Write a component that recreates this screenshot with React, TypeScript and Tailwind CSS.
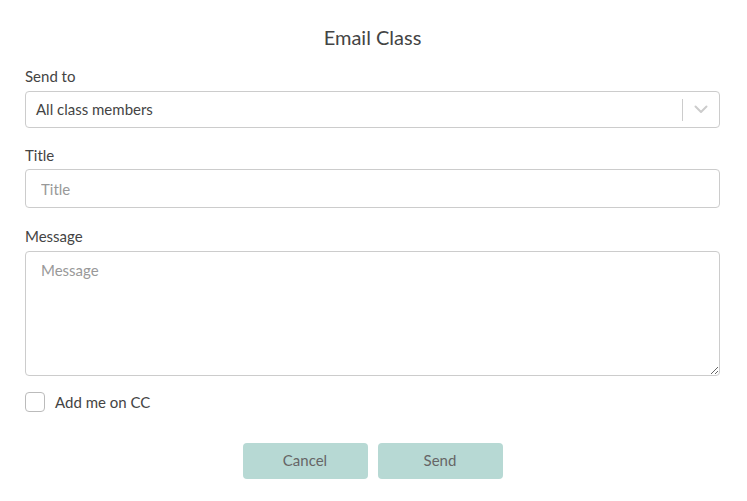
import React from 'react';

export default function App() {
  return (
    <div className="w-[747px] h-[501px] bg-white text-[#444] font-['Lato',sans-serif] text-[15px]">
      <div className="w-[695px] ml-[25px] pt-[25px]">
        <h1 className="text-center text-[20px] leading-[24px] text-[#444] mb-[17px]">Email Class</h1>

        <label className="block leading-[20px] mb-[5px]">Send to</label>
        <div className="flex items-center h-[37px] border border-[#ccc] rounded-[4px]">
          <span className="flex-1 pl-[10px]">All class members</span>
          <span className="w-px h-[22px] bg-[#ccc]" />
          <span className="w-[36px] flex justify-center text-[#ccc]">
            <svg width="14" height="9" viewBox="0 0 14 9" fill="none" stroke="currentColor" strokeWidth="2" strokeLinecap="round" strokeLinejoin="round">
              <path d="M1.5 1.5 7 7l5.5-5.5" />
            </svg>
          </span>
        </div>

        <label className="block leading-[20px] mt-[17px] mb-[4px]">Title</label>
        <input
          placeholder="Title"
          className="block w-full h-[39px] border border-[#ccc] rounded-[4px] px-[15px] text-[15px] placeholder:text-[#999] outline-none"
        />

        <label className="block leading-[20px] mt-[18px] mb-[5px]">Message</label>
        <textarea
          placeholder="Message"
          className="block w-full h-[125px] border border-[#ccc] rounded-[4px] px-[15px] py-[7px] text-[15px] placeholder:text-[#999] outline-none"
        />

        <label className="flex items-center gap-[10px] mt-[15px]">
          <span className="w-[20px] h-[20px] border border-[#bbb] rounded-[4px]" />
          <span>Add me on CC</span>
        </label>

        <div className="flex justify-center gap-[10px] mt-[29px]">
          <button className="w-[125px] h-[36px] rounded-[4px] bg-[#b7d9d4] text-[#666]">Cancel</button>
          <button className="w-[125px] h-[36px] rounded-[4px] bg-[#b7d9d4] text-[#666]">Send</button>
        </div>
      </div>
    </div>
  );
}
